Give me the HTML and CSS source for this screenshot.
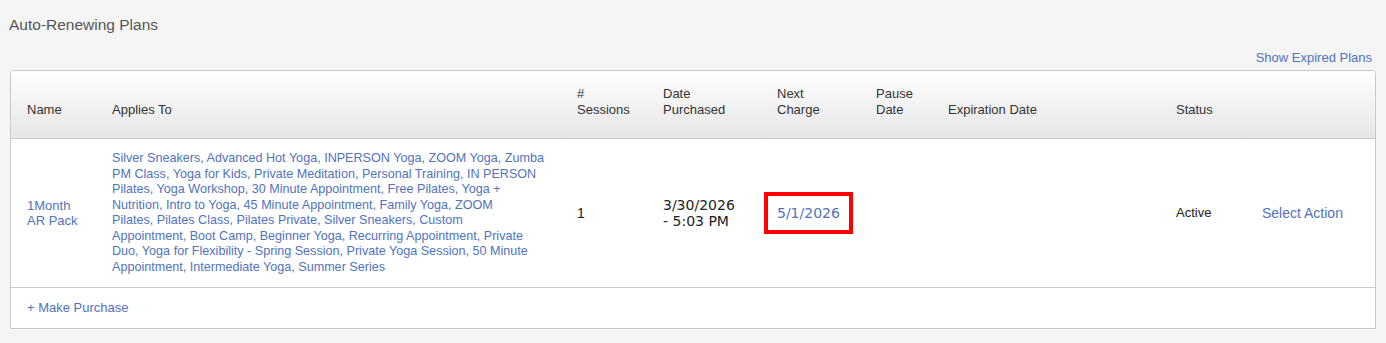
FILE: index.html
```html
<!DOCTYPE html>
<html lang="en">
<head>
    <meta charset="UTF-8">
    <title>Auto-Renewing Plans</title>
    <link rel="stylesheet" href="styles.css">
</head>
<body>
    <h2 class="page-title">Auto-Renewing Plans</h2>

    <div class="toolbar">
        <a href="#" class="link">Show Expired Plans</a>
    </div>

    <div class="plans-box">
        <table class="plans">
            <colgroup>
                <col style="width: 85px">
                <col style="width: 465px">
                <col style="width: 86px">
                <col style="width: 114px">
                <col style="width: 99px">
                <col style="width: 72px">
                <col style="width: 228px">
                <col style="width: 86px">
                <col style="width: 129px">
            </colgroup>
            <thead>
                <tr>
                    <th>Name</th>
                    <th>Applies To</th>
                    <th>#<br>Sessions</th>
                    <th>Date<br>Purchased</th>
                    <th>Next<br>Charge</th>
                    <th>Pause<br>Date</th>
                    <th>Expiration Date</th>
                    <th>Status</th>
                    <th></th>
                </tr>
            </thead>
            <tbody>
                <tr>
                    <td><a href="#" class="link">1Month<br>AR Pack</a></td>
                    <td class="applies"><a href="#" class="link">Silver Sneakers, Advanced Hot Yoga, INPERSON Yoga, ZOOM Yoga, Zumba<br>PM Class, Yoga for Kids, Private Meditation, Personal Training, IN PERSON<br>Pilates, Yoga Workshop, 30 Minute Appointment, Free Pilates, Yoga +<br>Nutrition, Intro to Yoga, 45 Minute Appointment, Family Yoga, ZOOM<br>Pilates, Pilates Class, Pilates Private, Silver Sneakers, Custom<br>Appointment, Boot Camp, Beginner Yoga, Recurring Appointment, Private<br>Duo, Yoga for Flexibility - Spring Session, Private Yoga Session, 50 Minute<br>Appointment, Intermediate Yoga, Summer Series</a></td>
                    <td class="big">1</td>
                    <td class="date">3/30/2026<br>- 5:03 PM</td>
                    <td><a href="#" class="link date highlight">5/1/2026</a></td>
                    <td></td>
                    <td></td>
                    <td>Active</td>
                    <td><a href="#" class="link big">Select Action</a></td>
                </tr>
            </tbody>
            <tfoot>
                <tr>
                    <td colspan="9"><a href="#" class="link">+ Make Purchase</a></td>
                </tr>
            </tfoot>
        </table>
    </div>
</body>
</html>
```

FILE: styles.css
```css
body {
    font-family: "Liberation Sans", Arial, sans-serif;
    font-size: 13px;
    margin: 0;
    padding: 0 10px;
    background-color: #f5f5f5;
    color: #222;
}

.page-title {
    font-size: 15.5px;
    font-weight: normal;
    color: #555;
    margin: 0 0 0 -1px;
    padding: 16px 0 0 0;
    line-height: 18px;
}

.toolbar {
    text-align: right;
    padding: 16px 4px 0 0;
    height: 20px;
    line-height: 16px;
}

.link {
    color: #5173bf;
    text-decoration: none;
}

.plans-box {
    border: 1px solid #c9c9c9;
    border-radius: 4px 4px 0 0;
    background-color: white;
    overflow: hidden;
}

.plans {
    width: 100%;
    border-collapse: collapse;
    table-layout: fixed;
}

.plans th {
    text-align: left;
    font-weight: normal;
    color: #333;
    vertical-align: bottom;
    padding: 0 0 20px 16px;
    height: 47px;
    line-height: 16px;
    background: linear-gradient(to bottom, #ffffff, #e6e6e6);
    border-bottom: 1px solid #c9c9c9;
}

.plans td {
    vertical-align: middle;
    padding: 11px 0 11px 16px;
    line-height: 15.5px;
}

.plans td.applies {
    font-size: 12.6px;
    padding-right: 4px;
}

.plans tbody td {
    height: 126px;
}

.plans .big {
    font-size: 14px;
    line-height: 16px;
}

.plans .date {
    font-family: "DejaVu Sans", sans-serif;
    font-size: 14px;
    line-height: 16px;
}

.highlight {
    outline: 4px solid #f00;
    outline-offset: 9px;
}

.plans tfoot td {
    border-top: 1px solid #c9c9c9;
    padding: 12px 0 12px 16px;
    height: 15px;
}
```
